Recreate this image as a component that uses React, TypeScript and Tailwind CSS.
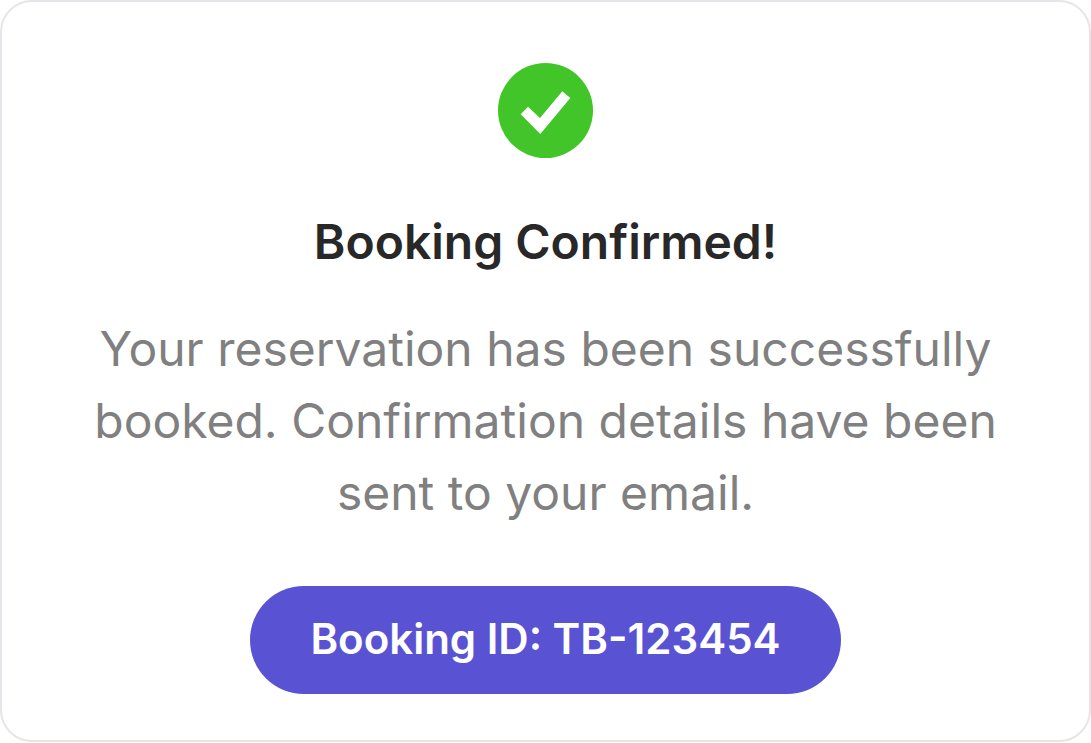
export default function App() {
  return (
    <main className="min-h-screen bg-white flex flex-col pb-px font-['Inter',sans-serif]">
      <section className="flex flex-1 flex-col items-center rounded-[32px] border-2 border-[#e6e6ea] bg-white px-20 pt-[61px] pb-11 text-center">
        <svg className="size-[95px]" viewBox="0 0 95 95" aria-hidden="true">
          <circle cx="47.5" cy="47.5" r="47.5" fill="#42c528" />
          <path d="M22.700 51.300L30 43.700L42 55L64.300 28.200L72.300 35L42.300 71Z" fill="#fff" />
        </svg>
        <h1 className="mt-12 text-5xl leading-[72px] font-semibold text-[#282828]">Booking Confirmed!</h1>
        <p className="mt-[35px] text-5xl leading-[72px] text-[#808080]">
          Your reservation has been successfully booked. Confirmation details have been sent to your email.
        </p>
        <p className="mt-[57px] rounded-full bg-[#5953d3] px-[60px] pt-[23px] pb-[25px] text-[42px] leading-[60px] font-semibold text-white">
          Booking ID: TB-123454
        </p>
      </section>
    </main>
  );
}
